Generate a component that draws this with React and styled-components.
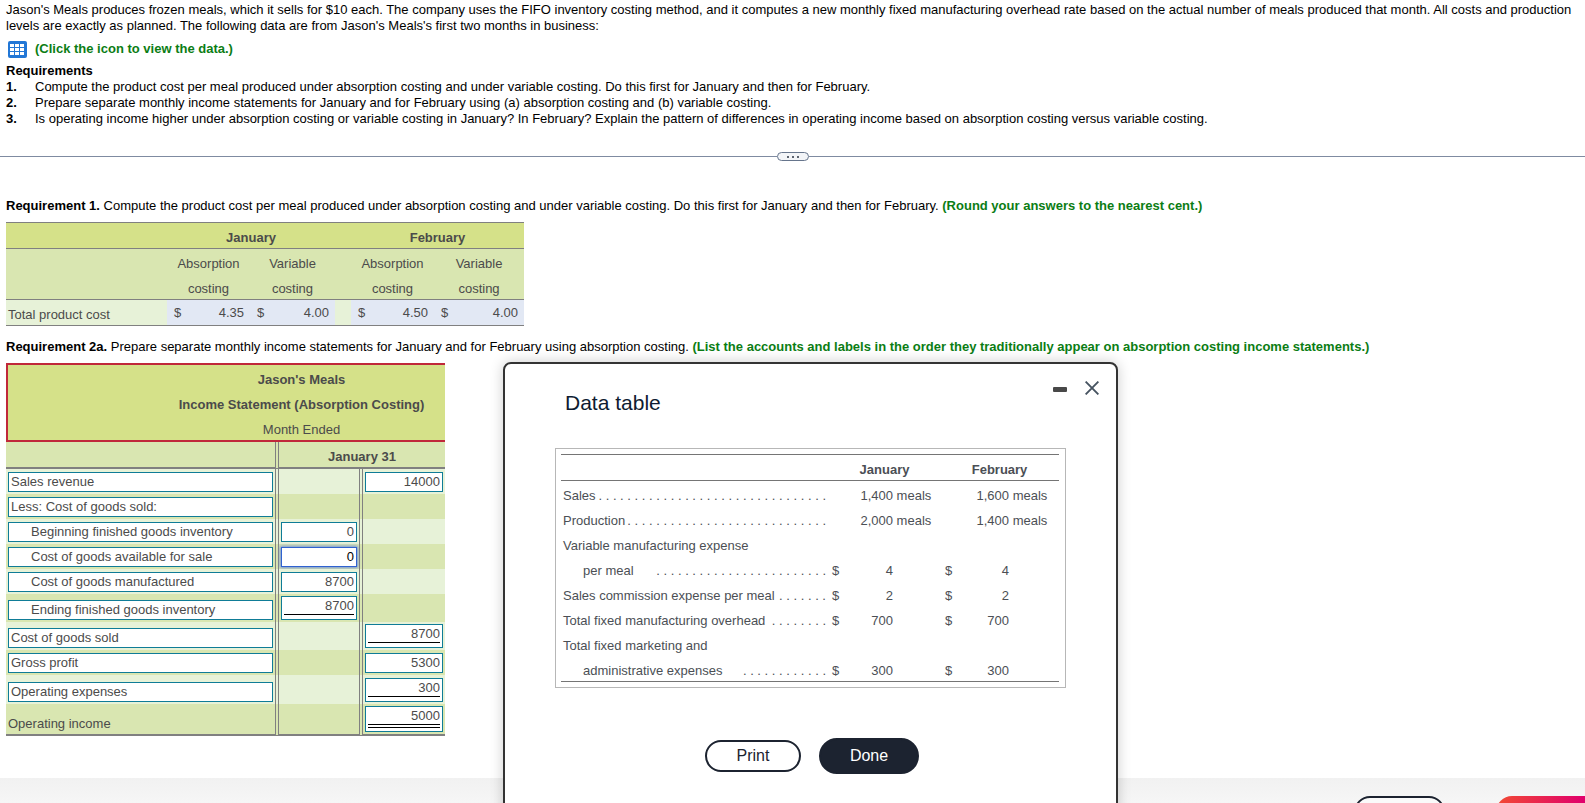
import styled, { createGlobalStyle, css } from "styled-components";

const GlobalStyle = createGlobalStyle`
  * {
    box-sizing: border-box;
  }
  body {
    margin: 0;
    background: #fff;
    color: #000;
    font-family: "Liberation Sans", Arial, sans-serif;
    font-size: 13px;
    line-height: 16px;
  }
  button, input {
    font-family: inherit;
  }
`;

const Page = styled.div`
  position: relative;
  height: 100vh;
  display: flex;
  flex-direction: column;
  overflow: hidden;
`;

const Intro = styled.section`
  padding: 2px 6px 0;
`;

const Paragraph = styled.p`
  margin: 0;
`;

const DataLink = styled.a`
  display: flex;
  align-items: center;
  gap: 8px;
  margin: 6px 0 5px;
  padding-left: 2px;
  color: #0b7d14;
  font-weight: 700;
  line-height: 18px;
  text-decoration: none;
`;

const SectionTitle = styled.h2`
  margin: 0;
  font-size: 13px;
  line-height: 16px;
`;

const RequirementList = styled.ol`
  margin: 0;
  padding: 0;
  list-style: none;
  counter-reset: item;
`;

const RequirementItem = styled.li`
  display: flex;
  counter-increment: item;

  &::before {
    content: counter(item) ".";
    width: 29px;
    font-weight: 700;
  }
`;

const Divider = styled.div`
  display: flex;
  align-items: center;
  margin-top: 25px;

  &::before,
  &::after {
    content: "";
    flex: 1;
    height: 1px;
    background: #7f8ba1;
  }
`;

const DividerHandle = styled.button`
  display: flex;
  align-items: center;
  justify-content: center;
  gap: 3px;
  width: 32px;
  height: 9px;
  padding: 0;
  border: 1px solid #66758c;
  border-radius: 5px;
  background: #f3f5f8;
`;

const Dot = styled.span`
  width: 2px;
  height: 2px;
  background: #5c6470;
`;

const Work = styled.main`
  padding: 37px 6px 42px;
`;

const Hint = styled.strong`
  color: #0b7d14;
`;

const GreenTable = styled.table`
  border-collapse: separate;
  border-spacing: 0;
  table-layout: fixed;
  color: #4b4b4b;

  th, td {
    padding: 0;
  }
`;

const CostTable = styled(GreenTable)`
  width: 518px;
  margin: 8px 0 13px;
`;

const CostHead = styled.th`
  height: 26px;
  border-top: 1px solid #808080;
  background: #d5e189;
  line-height: 21px;
  vertical-align: bottom;
`;

const CostSubHead = styled.th`
  height: 52px;
  border-top: 1px solid #808080;
  border-bottom: 1px solid #808080;
  background: #d9e6b1;
`;

const HeadLine = styled.div`
  height: 25px;
  padding-top: 4px;
  font-weight: ${({ $plain }) => ($plain ? 400 : 700)};
  line-height: 21px;
`;

const CostLabel = styled.th`
  height: 26px;
  border-bottom: 1px solid #808080;
  background: #e7f2d8;
  font-weight: 400;
  text-align: left;

  && {
    padding: 4px 0 0 2px;
  }
`;

const CostCell = styled.td`
  border-bottom: 1px solid #808080;
  background: ${({ $gap }) => ($gap ? "#e7f2d8" : "#e2e8f4")};
`;

const Money = styled.div`
  display: flex;
  justify-content: space-between;
  padding: 0 6px 0 7px;
`;

const StatementTable = styled(GreenTable)`
  width: 439px;
  margin-top: 8px;
`;

const StatementHead = styled.th`
  height: 79px;
  border: 2px solid #c0283a;
  border-right: 0;
  background: #d5e189;

  && {
    padding-left: 150px;
  }
`;

const StatementSubHead = styled.th`
  height: 27px;
  border-bottom: 2px solid #808080;
  background: #d9e6b1;

  && {
    padding-top: 4px;
  }
  & + & {
    border-left: 4px double #808080;
  }
`;

const StatementRow = styled.tr`
  background: #e7f2d8;

  &:nth-child(even) {
    background: #d9e6b1;
  }

  &:last-child td {
    border-bottom: 2px solid #808080;
  }
`;

const StatementCell = styled.td`
  height: ${({ $height }) => $height}px;
  vertical-align: bottom;

  && {
    padding: 0 2px 2px;
  }
  & + & {
    border-left: 4px double #808080;
  }
`;

const Field = styled.div`
  padding: 0 2px ${({ $bottom }) => $bottom || 2}px;
  border: 1px solid #0f7c97;
  background: #fff;
  ${({ $active }) =>
    $active &&
    css`
      border-color: #2f62d0;
      box-shadow: 0 0 3px 1px #6f8fd8;
    `}
`;

const FieldInput = styled.input`
  display: block;
  width: 100%;
  height: ${({ $height }) => $height || 16}px;
  padding: 0 0 0 ${({ $indent }) => ($indent ? 20 : 0)}px;
  border: 0;
  border-bottom: ${({ $line }) => $line || 0};
  outline: 0;
  background: transparent;
  color: ${({ $active }) => ($active ? "#000" : "#4b4b4b")};
  font-size: 13px;
  text-align: ${({ $amount }) => ($amount ? "right" : "left")};
`;

const Footer = styled.footer`
  display: flex;
  flex: none;
  justify-content: flex-end;
  gap: 51px;
  height: 72px;
  padding-top: 18px;
  background: linear-gradient(#f1f1f1, #f9f9f9 40px);
`;

const FooterButton = styled.button`
  width: 91px;
  height: 36px;
  border: 2px solid #1c2330;
  border-radius: 16px;
  background: #fafafa;
`;

const FooterPrimary = styled.button`
  width: 120px;
  height: 36px;
  margin-right: -31px;
  border: 0;
  border-radius: 16px;
  background: linear-gradient(100deg, #f24b33, #e0006c 70%);
`;

const Modal = styled.section`
  position: absolute;
  top: 362px;
  left: 503px;
  width: 615px;
  height: 480px;
  padding: 14px 15px 0 50px;
  border: 2px solid #333;
  border-radius: 8px;
  background: #fff;
  box-shadow: 0 0 14px rgba(0, 0, 0, 0.2);
`;

const ModalHeader = styled.header`
  display: flex;
  align-items: flex-start;
  justify-content: space-between;
  padding-left: 10px;
`;

const ModalTitle = styled.h1`
  margin: 12px 0 0;
  color: #0e1b31;
  font-size: 21px;
  font-weight: 400;
  line-height: 26px;
`;

const WindowButtons = styled.div`
  display: flex;
  gap: 14px;
`;

const IconButton = styled.button`
  display: flex;
  width: 18px;
  height: 20px;
  padding: 0;
  border: 0;
  background: none;
  align-items: center;
  justify-content: center;
`;

const DataFrame = styled.div`
  width: 511px;
  margin-top: 32px;
  padding: 5px;
  border: 1px solid #b7b7b7;
`;

const DataTable = styled.table`
  width: 498px;
  border-collapse: separate;
  border-spacing: 0;
  border-bottom: 1px solid #757575;
  table-layout: fixed;
  color: #4b4f55;

  th, td {
    height: 25px;
    padding: 4px 0 0;
    font-weight: 400;
    text-align: left;
    white-space: pre;
  }
  thead th {
    height: 27px;
    padding-right: 2px;
    border-top: 1px solid #757575;
    border-bottom: 1px solid #757575;
    font-weight: 700;
    text-align: center;
  }
`;

const LeaderLabel = styled.div`
  display: flex;
  justify-content: space-between;
  padding: 0 3px 0 ${({ $indent }) => ($indent ? 22 : 2)}px;
`;

const DollarCell = styled.td`
  && {
    padding-left: 3px;
  }
`;

const NumberCell = styled.td`
  && {
    text-align: right;
  }
`;

const Actions = styled.div`
  display: flex;
  align-items: center;
  justify-content: center;
  gap: 18px;
  margin-top: 50px;
  padding-right: 32px;
`;

const ActionButton = styled.button`
  width: ${({ $primary }) => ($primary ? 100 : 96)}px;
  height: ${({ $primary }) => ($primary ? 36 : 32)}px;
  padding: 0;
  border: 2px solid #1c2330;
  border-radius: 18px;
  background: ${({ $primary }) => ($primary ? "#1c2330" : "#fff")};
  color: ${({ $primary }) => ($primary ? "#fff" : "#1c2330")};
  font-size: 16px;
`;

// Total lines drawn under an amount inside its box
const rules = {
  none: { height: 16, bottom: 2 },
  single: { height: 18, bottom: 4, line: "1px solid #000" },
  double: { height: 21, bottom: 3, line: "4px double #000" },
};

const statement = [
  { label: "Sales revenue", total: "14000" },
  { label: "Less: Cost of goods sold:" },
  { label: "Beginning finished goods inventory", indent: true, sub: "0" },
  { label: "Cost of goods available for sale", indent: true, sub: "0", active: true },
  { label: "Cost of goods manufactured", indent: true, sub: "8700" },
  { label: "Ending finished goods inventory", indent: true, sub: "8700", rule: "single", height: 28 },
  { label: "Cost of goods sold", total: "8700", rule: "single", height: 28 },
  { label: "Gross profit", total: "5300" },
  { label: "Operating expenses", total: "300", rule: "single", height: 29 },
  { label: "Operating income", plain: true, total: "5000", rule: "double", height: 32 },
];

const costData = [
  { label: "Sales", dots: 32, jan: "1,400", feb: "1,600", unit: " meals" },
  { label: "Production", dots: 28, jan: "2,000", feb: "1,400", unit: " meals" },
  { label: "Variable manufacturing expense" },
  { label: "per meal", indent: true, dots: 24, dollar: "$", jan: "4", feb: "4" },
  { label: "Sales commission expense per meal", dots: 7, dollar: "$", jan: "2", feb: "2" },
  { label: "Total fixed manufacturing overhead", dots: 8, dollar: "$", jan: "700", feb: "700" },
  { label: "Total fixed marketing and" },
  { label: "administrative expenses", indent: true, dots: 12, dollar: "$", jan: "300", feb: "300" },
];

const TableIcon = () => (
  <svg width="19" height="17" viewBox="0 0 19 17" aria-hidden="true">
    <rect width="19" height="17" rx="2" fill="#2277d6" />
    <g fill="#fff">
      {[3, 7, 11].map((y) =>
        [2, 7, 12].map((x) => <rect key={`${x}-${y}`} x={x} y={y} width="4" height="3" />)
      )}
    </g>
  </svg>
);

const AmountField = ({ label, value, rule = "none", active }) => {
  const { height, bottom, line } = rules[rule];
  return (
    <Field $bottom={bottom} $active={active}>
      <FieldInput
        aria-label={label}
        defaultValue={value}
        $amount
        $line={line}
        $active={active}
        $height={height}
      />
    </Field>
  );
};

const CostingHead = ({ children }) => (
  <CostSubHead>
    <HeadLine $plain>{children}</HeadLine>
    <HeadLine $plain>costing</HeadLine>
  </CostSubHead>
);

const CostPerMeal = () => (
  <CostTable>
    <colgroup>
      <col style={{ width: 161 }} />
      <col style={{ width: 83 }} />
      <col style={{ width: 85 }} />
      <col style={{ width: 16 }} />
      <col style={{ width: 83 }} />
      <col style={{ width: 90 }} />
    </colgroup>
    <thead>
      <tr>
        <CostHead />
        <CostHead colSpan={2}>January</CostHead>
        <CostHead />
        <CostHead colSpan={2}>February</CostHead>
      </tr>
      <tr>
        <CostSubHead />
        <CostingHead>Absorption</CostingHead>
        <CostingHead>Variable</CostingHead>
        <CostSubHead />
        <CostingHead>Absorption</CostingHead>
        <CostingHead>Variable</CostingHead>
      </tr>
    </thead>
    <tbody>
      <tr>
        <CostLabel>Total product cost</CostLabel>
        <CostCell><Money><span>$</span><span>4.35</span></Money></CostCell>
        <CostCell><Money><span>$</span><span>4.00</span></Money></CostCell>
        <CostCell $gap />
        <CostCell><Money><span>$</span><span>4.50</span></Money></CostCell>
        <CostCell><Money><span>$</span><span>4.00</span></Money></CostCell>
      </tr>
    </tbody>
  </CostTable>
);

const IncomeStatement = () => (
  <StatementTable>
    <colgroup>
      <col style={{ width: 269 }} />
      <col style={{ width: 84 }} />
      <col style={{ width: 86 }} />
    </colgroup>
    <thead>
      <tr>
        <StatementHead colSpan={3}>
          <HeadLine>Jason's Meals</HeadLine>
          <HeadLine>Income Statement (Absorption Costing)</HeadLine>
          <HeadLine $plain>Month Ended</HeadLine>
        </StatementHead>
      </tr>
      <tr>
        <StatementSubHead />
        <StatementSubHead colSpan={2}>January 31</StatementSubHead>
      </tr>
    </thead>
    <tbody>
      {statement.map((row) => (
        <StatementRow key={row.label}>
          <StatementCell $height={row.height || 25}>
            {row.plain ? (
              row.label
            ) : (
              <Field>
                <FieldInput aria-label="Account" defaultValue={row.label} $indent={row.indent} />
              </Field>
            )}
          </StatementCell>
          <StatementCell>
            {row.sub && (
              <AmountField label={row.label} value={row.sub} rule={row.rule} active={row.active} />
            )}
          </StatementCell>
          <StatementCell>
            {row.total && <AmountField label={row.label} value={row.total} rule={row.rule} />}
          </StatementCell>
        </StatementRow>
      ))}
    </tbody>
  </StatementTable>
);

const DataTableModal = () => (
  <Modal role="dialog" aria-labelledby="data-title">
    <ModalHeader>
      <ModalTitle id="data-title">Data table</ModalTitle>
      <WindowButtons>
        <IconButton aria-label="Minimize">
          <svg width="14" height="14" viewBox="0 0 14 14">
            <rect x="0" y="6" width="14" height="5" rx="1" fill="#484848" />
          </svg>
        </IconButton>
        <IconButton aria-label="Close">
          <svg width="14" height="14" viewBox="0 0 14 14">
            <path d="M.6 .6 13.4 13.4M13.4 .6 .6 13.4" stroke="#465360" strokeWidth="1.9" />
          </svg>
        </IconButton>
      </WindowButtons>
    </ModalHeader>
    <DataFrame>
      <DataTable>
        <colgroup>
          <col style={{ width: 268 }} />
          <col style={{ width: 15 }} />
          <col style={{ width: 49 }} />
          <col style={{ width: 49 }} />
          <col style={{ width: 15 }} />
          <col style={{ width: 52 }} />
          <col style={{ width: 50 }} />
        </colgroup>
        <thead>
          <tr>
            <th />
            <th colSpan={3}>January</th>
            <th colSpan={3}>February</th>
          </tr>
        </thead>
        <tbody>
          {costData.map((row) => (
            <tr key={row.label}>
              <th>
                <LeaderLabel $indent={row.indent}>
                  <span>{row.label}</span>
                  {row.dots && <span>{Array(row.dots).fill(".").join(" ")}</span>}
                </LeaderLabel>
              </th>
              <DollarCell>{row.dollar}</DollarCell>
              <NumberCell>{row.jan}</NumberCell>
              <td>{row.unit}</td>
              <DollarCell>{row.dollar}</DollarCell>
              <NumberCell>{row.feb}</NumberCell>
              <td>{row.unit}</td>
            </tr>
          ))}
        </tbody>
      </DataTable>
    </DataFrame>
    <Actions>
      <ActionButton>Print</ActionButton>
      <ActionButton $primary>Done</ActionButton>
    </Actions>
  </Modal>
);

const App = () => {
  return (
    <>
      <GlobalStyle />
      <Page>
        <Intro>
          <Paragraph>
            Jason's Meals produces frozen meals, which it sells for $10 each. The company uses the FIFO
            inventory costing method, and it computes a new monthly fixed manufacturing overhead rate based
            on the actual number of meals produced that month. All costs and production levels are exactly
            as planned. The following data are from Jason's Meals's first two months in business:
          </Paragraph>
          <DataLink href="#data-title">
            <TableIcon />
            (Click the icon to view the data.)
          </DataLink>
          <SectionTitle>Requirements</SectionTitle>
          <RequirementList>
            <RequirementItem>
              Compute the product cost per meal produced under absorption costing and under variable costing.
              Do this first for January and then for February.
            </RequirementItem>
            <RequirementItem>
              Prepare separate monthly income statements for January and for February using (a) absorption
              costing and (b) variable costing.
            </RequirementItem>
            <RequirementItem>
              Is operating income higher under absorption costing or variable costing in January? In
              February? Explain the pattern of differences in operating income based on absorption costing
              versus variable costing.
            </RequirementItem>
          </RequirementList>
        </Intro>
        <Divider>
          <DividerHandle aria-label="Resize">
            <Dot />
            <Dot />
            <Dot />
          </DividerHandle>
        </Divider>
        <Work>
          <Paragraph>
            <strong>Requirement 1.</strong> Compute the product cost per meal produced under absorption
            costing and under variable costing. Do this first for January and then for February.{" "}
            <Hint>(Round your answers to the nearest cent.)</Hint>
          </Paragraph>
          <CostPerMeal />
          <Paragraph>
            <strong>Requirement 2a.</strong> Prepare separate monthly income statements for January and for
            February using absorption costing.{" "}
            <Hint>
              (List the accounts and labels in the order they traditionally appear on absorption costing
              income statements.)
            </Hint>
          </Paragraph>
          <IncomeStatement />
        </Work>
        <Footer>
          <FooterButton aria-label="Clear all" />
          <FooterPrimary aria-label="Check answer" />
        </Footer>
        <DataTableModal />
      </Page>
    </>
  );
};

export default App;
